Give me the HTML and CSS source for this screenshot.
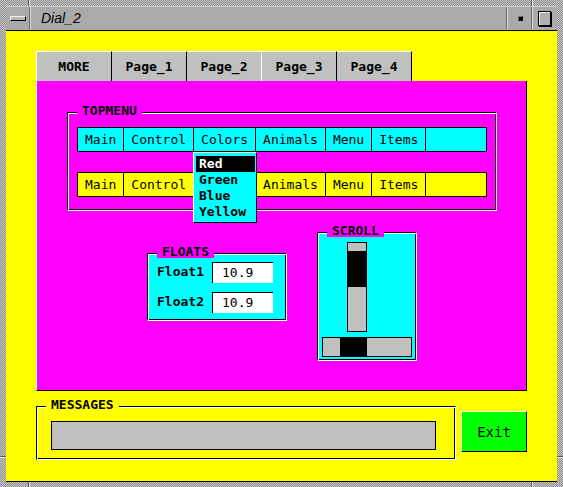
FILE: index.html
```html
<!DOCTYPE html>
<html>
<head>
<meta charset="utf-8">
<link rel="stylesheet" href="styles.css">
</head>
<body>
<div class="window">
  <span class="notch notch-tl"></span>
  <span class="notch notch-tr"></span>
  <span class="notch notch-bl"></span>
  <span class="notch notch-br"></span>
  <span class="notch-h notch-lb"></span>
  <span class="notch-h notch-rb"></span>
  <div class="titlebar">
    <div class="tb-btn tb-menu"><span class="menu-icon"></span></div>
    <div class="tb-title">Dial_2</div>
    <div class="tb-btn tb-min"><span class="min-icon"></span></div>
    <div class="tb-btn tb-max"><span class="max-icon"></span></div>
  </div>
  <div class="client">
    <div class="tabs">
      <div class="tab first">MORE</div>
      <div class="tab">Page_1</div>
      <div class="tab pre-active">Page_2</div>
      <div class="tab">Page_3</div>
      <div class="tab">Page_4</div>
    </div>
    <div class="panel">
      <div class="group topmenu">
        <span class="legend legend-magenta">TOPMENU</span>
        <div class="menubar bar-cyan">
          <span class="mi">Main</span><span class="mi">Control</span><span class="mi">Colors</span><span class="mi">Animals</span><span class="mi">Menu</span><span class="mi">Items</span>
        </div>
        <div class="menubar bar-yellow">
          <span class="mi">Main</span><span class="mi">Control</span><span class="mi covered">Colors</span><span class="mi">Animals</span><span class="mi">Menu</span><span class="mi">Items</span>
        </div>
        <div class="dropdown">
          <div class="dd-item selected">Red</div>
          <div class="dd-item">Green</div>
          <div class="dd-item">Blue</div>
          <div class="dd-item">Yellow</div>
        </div>
      </div>
      <div class="row">
        <div class="group floats">
          <span class="legend legend-magenta">FLOATS</span>
          <div class="float-grid">
            <span class="flabel">Float1</span><span class="finput">10.9</span>
            <span class="flabel">Float2</span><span class="finput">10.9</span>
          </div>
        </div>
        <div class="group scroll">
          <span class="legend legend-magenta">SCROLL</span>
          <div class="vscroll"><div class="vthumb"></div></div>
          <div class="hscroll"><div class="hthumb"></div></div>
        </div>
      </div>
    </div>
    <div class="bottom">
      <div class="group messages">
        <span class="legend legend-yellow">MESSAGES</span>
        <div class="msgfield"></div>
      </div>
      <button class="exit">Exit</button>
    </div>
  </div>
</div>
</body>
</html>
```
FILE: styles.css
```css
html, body {
  margin: 0;
  padding: 0;
  background: #a8a8a8;
}

.window {
  position: relative;
  width: 563px;
  height: 487px;
  box-sizing: border-box;
  padding: 6px 6px 5px 6px;
  display: flex;
  flex-direction: column;
  background-color: #b4b4b4;
  background-image: repeating-conic-gradient(#8e8e8e 0 25%, #c9c9c9 0 50%);
  background-size: 2px 2px;
  font-family: "DejaVu Sans Mono", "Liberation Mono", monospace;
  font-size: 13px;
  color: #000;
}

.notch {
  position: absolute;
  width: 1px;
  height: 6px;
  background: #5a5a5a;
  box-shadow: 1px 0 #e8e8e8;
}
.notch-tl { left: 28px; top: 0; }
.notch-tr { left: 531px; top: 0; }
.notch-bl { left: 28px; bottom: 0; height: 5px; }
.notch-br { left: 531px; bottom: 0; height: 5px; }

.notch-h {
  position: absolute;
  height: 1px;
  width: 6px;
  background: #5a5a5a;
  box-shadow: 0 1px #e8e8e8;
}
.notch-lb { left: 0; top: 456px; }
.notch-rb { right: 0; top: 456px; }

/* ---------- title bar ---------- */
.titlebar {
  height: 25px;
  box-sizing: border-box;
  display: flex;
  background: #aaaaaa;
  border-top: 1px solid #cfcfcf;
  border-bottom: 1px solid #000;
}

.tb-btn {
  display: flex;
  align-items: center;
  justify-content: center;
}

.tb-menu {
  width: 24px;
  box-sizing: border-box;
  border-right: 1px solid #6e6e6e;
  box-shadow: 1px 0 #d8d8d8;
}

.menu-icon {
  display: block;
  width: 14px;
  height: 3px;
  background: #b8b8b8;
  border: 1px solid;
  border-color: #f0f0f0 #000 #000 #f0f0f0;
  margin-left: 1px;
}

.tb-title {
  flex: 1;
  padding-left: 11px;
  font-family: "Liberation Sans", Arial, sans-serif;
  font-style: italic;
  font-size: 14px;
  line-height: 22px;
}

.tb-min {
  width: 25px;
  box-sizing: border-box;
  border-left: 1px solid #d8d8d8;
  box-shadow: -1px 0 #6e6e6e;
  border-right: 1px solid #6e6e6e;
}

.min-icon {
  display: block;
  width: 3px;
  height: 3px;
  background: #000;
  border: 1px solid;
  border-color: #777 #000 #000 #777;
  margin-left: 1px;
}

.tb-max {
  width: 25px;
  box-sizing: border-box;
  border-left: 1px solid #d8d8d8;
}

.max-icon {
  display: block;
  width: 11px;
  height: 13px;
  border: 1px solid #000;
  box-shadow: inset 1px 1px #ececec, 1px 1px #000;
  background: #b0b0b0;
  margin-left: -1px;
}

/* ---------- client area ---------- */
.client {
  flex: 1;
  background: #ffff00;
  border-bottom: 1px solid #000;
  padding: 20px 0 0 30px;
}

.tabs {
  display: flex;
  height: 30px;
}

.tab {
  width: 75px;
  box-sizing: border-box;
  background: #c0c0c0;
  border-top: 1px solid #ffffff;
  border-right: 1px solid #000;
  text-align: center;
  font-weight: bold;
  line-height: 29px;
}
.tab.first {
  width: 76px;
  border-left: 1px solid #ffffff;
}
.tab.pre-active {
  border-right-color: #ffffff;
}

.panel {
  width: 491px;
  height: 310px;
  box-sizing: border-box;
  background: #ff00ff;
  border-left: 1px solid #ffffff;
  border-right: 1px solid #000;
  border-bottom: 1px solid #000;
  padding: 31px 0 0 30px;
}

/* etched group frames */
.group {
  position: relative;
  box-sizing: border-box;
  border: 1px solid;
  border-color: #000 #ffffff #ffffff #000;
  box-shadow: inset 1px 1px #ffffff, inset -1px -1px #000;
}

.legend {
  position: absolute;
  top: -8px;
  left: 9px;
  padding: 0 5px;
  font-weight: bold;
  line-height: 12px;
  height: 12px;
}
.legend-magenta { background: #ff00ff; }
.legend-yellow { background: #ffff00; }

/* TOPMENU */
.topmenu {
  width: 430px;
  height: 99px;
  padding: 14px 0 0 9px;
}

.menubar {
  width: 410px;
  height: 25px;
  box-sizing: border-box;
  border: 1px solid #000;
  display: flex;
}
.bar-cyan { background: #00ffff; }
.bar-yellow { background: #ffff00; margin-top: 20px; }

.mi {
  padding: 0 7px;
  border-right: 1px solid #000;
  line-height: 23px;
  white-space: nowrap;
}
.mi.covered {
  color: transparent;
  visibility: hidden;
}

.dropdown {
  position: absolute;
  left: 125px;
  top: 39px;
  z-index: 2;
  width: 64px;
  box-sizing: border-box;
  background: #00ffff;
  border: 1px solid;
  border-color: #ffffff #000 #000 #ffffff;
  padding: 3px 1px 2px 2px;
}

.dd-item {
  height: 16px;
  line-height: 16px;
  padding-left: 3px;
  font-weight: bold;
}
.dd-item.selected {
  background: #000;
  color: #ffffff;
}

/* row with floats and scroll */
.row {
  display: flex;
  align-items: flex-start;
  gap: 30px;
  margin-top: 21px;
  padding-left: 80px;
}

.floats {
  width: 140px;
  height: 68px;
  margin-top: 21px;
  background: #00ffff;
  padding: 8px 0 0 9px;
}

.float-grid {
  display: grid;
  grid-template-columns: 55px 61px;
  grid-auto-rows: 21px;
  row-gap: 9px;
}

.flabel {
  font-weight: bold;
  line-height: 20px;
}

.finput {
  box-sizing: border-box;
  background: #ffffff;
  border-top: 1px solid #000;
  border-left: 1px solid #000;
  padding-left: 9px;
  line-height: 20px;
}

.scroll {
  width: 100px;
  height: 129px;
  background: #00ffff;
  padding: 9px 0 0 4px;
}

.vscroll {
  width: 20px;
  height: 90px;
  box-sizing: border-box;
  margin-left: 25px;
  border: 1px solid #000;
  background: #c0c0c0;
  padding-top: 8px;
}
.vthumb {
  height: 36px;
  background: #000;
}

.hscroll {
  width: 90px;
  height: 20px;
  box-sizing: border-box;
  margin-top: 5px;
  border: 1px solid #000;
  background: #c0c0c0;
  padding-left: 17px;
}
.hthumb {
  width: 27px;
  height: 18px;
  background: #000;
}

/* bottom row */
.bottom {
  display: flex;
  align-items: flex-start;
  gap: 5px;
  margin-top: 15px;
}

.messages {
  width: 420px;
  height: 54px;
  padding: 14px 0 0 14px;
}

.msgfield {
  width: 385px;
  height: 29px;
  box-sizing: border-box;
  border: 1px solid #000;
  background: #c0c0c0;
}

.exit {
  margin: 5px 0 0 0;
  width: 66px;
  height: 41px;
  box-sizing: border-box;
  padding: 0;
  background: #00ff00;
  border: 1px solid;
  border-color: #ffffff #000 #000 #ffffff;
  font-family: "DejaVu Sans Mono", "Liberation Mono", monospace;
  font-size: 14px;
  color: #000;
  text-align: center;
}
```
